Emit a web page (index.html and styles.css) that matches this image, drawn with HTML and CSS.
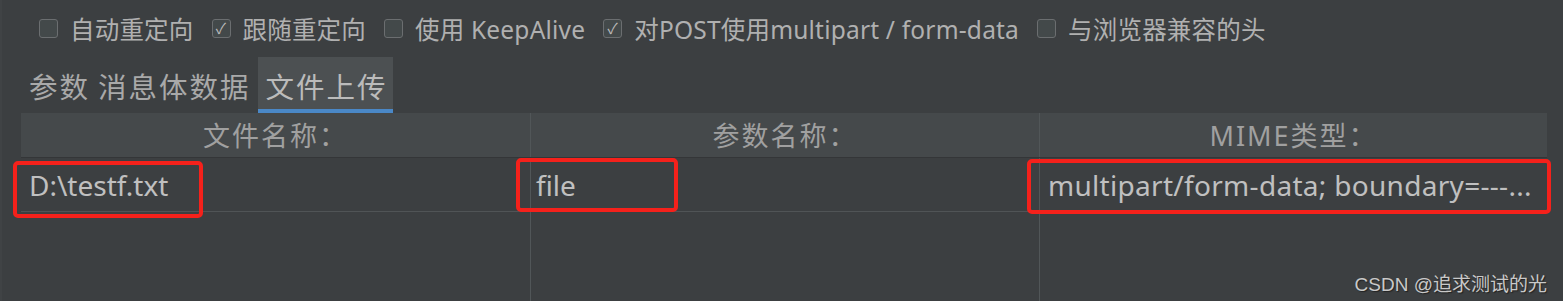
FILE: index.html
```html
<!DOCTYPE html>
<html lang="zh-CN">
<head>
    <meta charset="UTF-8">
    <meta name="viewport" content="width=device-width, initial-scale=1.0">
    <title>HTTP请求 - 文件上传</title>
    <link rel="stylesheet" href="styles.css">
</head>
<body>
    <div class="panel">
        <div class="options">
            <label class="option"><span class="box"></span>自动重定向</label>
            <label class="option"><span class="box checked">&#10003;</span>跟随重定向</label>
            <label class="option"><span class="box"></span>使用 KeepAlive</label>
            <label class="option"><span class="box checked">&#10003;</span>对POST使用multipart / form-data</label>
            <label class="option"><span class="box"></span>与浏览器兼容的头</label>
        </div>

        <div class="tabs">
            <div class="tab">参数</div>
            <div class="tab">消息体数据</div>
            <div class="tab active">文件上传</div>
        </div>

        <div class="table">
            <div class="row head">
                <div class="cell">文件名称：</div>
                <div class="cell">参数名称：</div>
                <div class="cell">MIME类型：</div>
            </div>
            <div class="row body">
                <div class="cell">D:\testf.txt</div>
                <div class="cell name">file</div>
                <div class="cell mime">multipart/form-data; boundary=---...</div>
                <!-- annotation boxes -->
                <span class="mark mark-1"></span>
                <span class="mark mark-2"></span>
                <span class="mark mark-3"></span>
            </div>
            <div class="row filler">
                <div class="cell"></div>
                <div class="cell"></div>
                <div class="cell"></div>
            </div>
        </div>

        <div class="watermark">CSDN @追求测试的光</div>
    </div>
</body>
</html>
```

FILE: styles.css
```css
* {
    box-sizing: border-box;
    margin: 0;
    padding: 0;
}

body {
    width: 1563px;
    height: 301px;
    overflow: hidden;
    background-color: #3c3f41;
    font-family: "Noto Sans", "Noto Sans CJK SC", sans-serif;
    color: #bbbbbb;
}

.panel {
    position: relative;
    height: 301px;
    border-left: 2px solid #404345;
}

.options {
    display: flex;
    align-items: center;
    height: 57px;
    padding-left: 37px;
    gap: 18px;
    font-size: 24.5px;
    letter-spacing: 0.2px;
    color: #b0b0b0;
}

.option {
    display: flex;
    align-items: center;
    gap: 12px;
    white-space: nowrap;
}

.box {
    display: flex;
    align-items: center;
    justify-content: center;
    width: 19px;
    height: 19px;
    border: 1px solid #6b6e70;
    border-radius: 3px;
    background-color: #43494a;
    font-size: 15px;
    line-height: 1;
    color: #bbbbbb;
}

.tabs {
    display: flex;
    height: 56px;
    padding-left: 23px;
    font-size: 28.5px;
}

.tab {
    display: flex;
    align-items: center;
    padding: 0 4px;
    letter-spacing: 2px;
    color: #a9a9a9;
}

.tab:nth-child(2) {
    padding-right: 7px;
}

.tab.active {
    background-color: #4c5052;
    border-bottom: 4px solid #4a88c7;
    padding: 4px 5px 0 8px;
    color: #bbbbbb;
}

.table {
    margin-left: 19px;
    width: 1526px;
}

.row {
    display: grid;
    grid-template-columns: 509px 509px 508px;
}

.row .cell + .cell {
    border-left: 1px solid #515658;
}

.head {
    height: 45px;
    background-color: #45494b;
    border-bottom: 1px solid #343638;
    font-size: 27px;
    letter-spacing: 2px;
    color: #a0a0a0;
}

.head .cell {
    display: flex;
    align-items: center;
    justify-content: center;
    padding-bottom: 2px;
}

.body {
    position: relative;
    height: 54px;
    border-bottom: 1px solid #505456;
    font-size: 28px;
}

.body .cell {
    display: flex;
    align-items: center;
    padding: 0 8px;
    white-space: nowrap;
    color: #c0c0c0;
}

.body .name {
    padding-left: 5px;
}

.body .mime {
    letter-spacing: 0.3px;
}

.filler {
    height: 90px;
}

.mark {
    position: absolute;
    border: 4px solid #f5211b;
    border-radius: 5px;
}

.mark-1 {
    left: -8px;
    top: 3px;
    width: 190px;
    height: 57px;
}

.mark-2 {
    left: 495px;
    top: 0;
    width: 162px;
    height: 54px;
}

.mark-3 {
    left: 1006px;
    top: 1px;
    width: 524px;
    height: 55px;
}

.watermark {
    position: absolute;
    right: 16px;
    bottom: 5px;
    font-family: "Liberation Sans", "Noto Sans CJK SC", sans-serif;
    font-size: 19px;
    color: #c9c9c9;
    text-shadow: 1px 1px 1px #222;
}
```
